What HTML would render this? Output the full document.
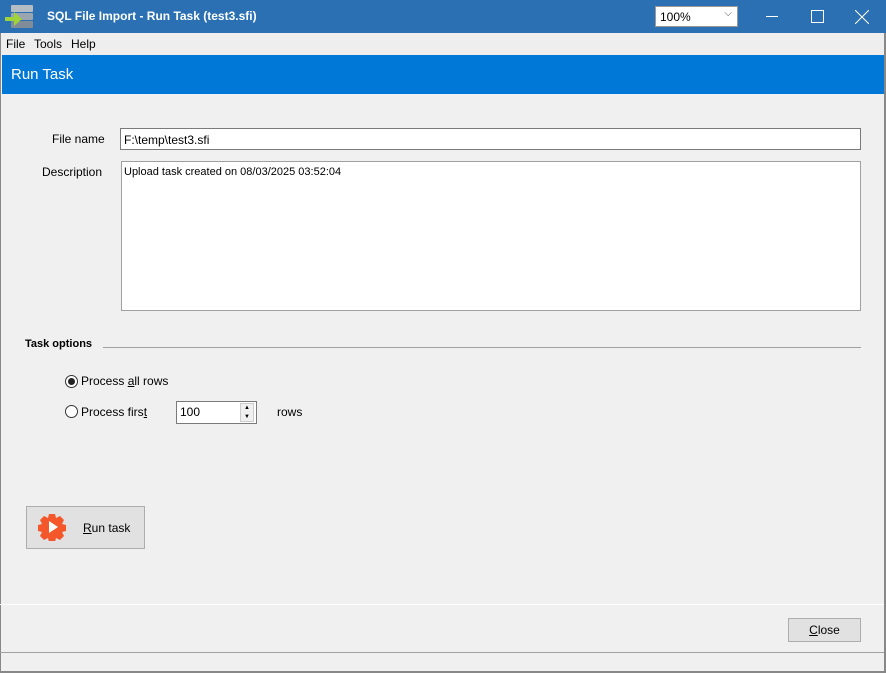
<!DOCTYPE html>
<html><head><meta charset="utf-8"><style>
*{box-sizing:border-box;margin:0;padding:0}
body{width:886px;height:673px;overflow:hidden;background:#f0f0f0;font-family:"Liberation Sans",sans-serif;font-size:12px;color:#000;position:relative}
.a{position:absolute}
u{text-decoration:underline}
</style></head><body>
<div class="a" style="left:0;top:0;width:886px;height:33px;background:#2a70b3"></div>
<svg class="a" style="left:4px;top:4px" width="30" height="26" viewBox="0 0 30 26">
<rect x="7" y="1" width="22" height="7" rx="1" fill="#b4bcc4"/><rect x="7" y="9" width="22" height="7" rx="1" fill="#9aa5b0"/><rect x="7" y="17" width="22" height="7" rx="1" fill="#808c98"/>
<path d="M1 13h9V8l8 7-8 7v-5H1z" fill="#9fd33a"/></svg>
<div class="a" style="left:47px;top:9px;color:#fff;font-weight:bold;font-size:12px">SQL File Import - Run Task (test3.sfi)</div>
<div class="a" style="left:655px;top:6px;width:83px;height:21px;background:#fff;border:1px solid #999;padding:3px 0 0 4px;font-size:12px">100%<span style="position:absolute;right:5px;top:1px;font-size:10px;color:#555">⌵</span></div>
<div class="a" style="left:766px;top:16px;width:12px;height:1px;background:#fff"></div>
<div class="a" style="left:811px;top:10px;width:13px;height:13px;border:1px solid #fff"></div>
<svg class="a" style="left:855px;top:10px" width="14" height="14"><path d="M0 0L14 14M14 0L0 14" stroke="#fff" stroke-width="1"/></svg>
<div class="a" style="left:0;top:33px;width:886px;height:22px;background:#eeeeee"></div>
<div class="a" style="left:6px;top:37px">File</div><div class="a" style="left:34px;top:37px">Tools</div><div class="a" style="left:71px;top:37px">Help</div>
<div class="a" style="left:2px;top:55px;width:882px;height:39px;background:#0078d7"></div>
<div class="a" style="left:11px;top:66px;color:#fff;font-size:15px">Run Task</div>
<div class="a" style="left:0;top:33px;width:1px;height:640px;background:#888"></div>
<div class="a" style="left:884px;top:33px;width:2px;height:640px;background:#888"></div>
<div class="a" style="left:52px;top:132px">File name</div>
<div class="a" style="left:120px;top:128px;width:741px;height:22px;background:#fff;border:1px solid #7a7a7a;padding:4px 3px">F:\temp\test3.sfi</div>
<div class="a" style="left:42px;top:165px">Description</div>
<div class="a" style="left:121px;top:161px;width:740px;height:150px;background:#fff;border:1px solid #a0a0a0;padding:4px 2px;font-size:11px">Upload task created on 08/03/2025 03:52:04</div>
<div class="a" style="left:25px;top:338px;font-weight:bold;font-size:11px">Task options</div>
<div class="a" style="left:103px;top:347px;width:758px;height:1px;background:#a0a0a0"></div>
<div class="a" style="left:65px;top:375px;width:13px;height:13px;border:1px solid #333;border-radius:50%;background:#fff"><div style="margin:2px;width:7px;height:7px;border-radius:50%;background:#222"></div></div>
<div class="a" style="left:81px;top:374px">Process <u>a</u>ll rows</div>
<div class="a" style="left:65px;top:405px;width:13px;height:13px;border:1px solid #333;border-radius:50%;background:#fff"></div>
<div class="a" style="left:81px;top:405px">Process firs<u>t</u></div>
<div class="a" style="left:176px;top:401px;width:81px;height:23px;background:#fff;border:1px solid #7a7a7a;padding:3px 3px">100
<div style="position:absolute;right:2px;top:1px;width:14px;height:19px;background:#f0f0f0;border:1px solid #ccc;font-size:6px;line-height:9px;text-align:center">▲<br>▼</div></div>
<div class="a" style="left:277px;top:405px">rows</div>
<div class="a" style="left:26px;top:506px;width:119px;height:43px;background:#e1e1e1;border:1px solid #adadad"></div>
<svg class="a" style="left:38px;top:513px" width="28" height="28" viewBox="0 0 28 28"><path d="M11 1h6l1 4 4-2 4 4-2 4 4 1v6l-4 1 2 4-4 4-4-2-1 4h-6l-1-4-4 2-4-4 2-4-4-1v-6l4-1-2-4 4-4 4 2z" fill="#f4572a"/><path d="M11 8v12l9-6z" fill="#fff"/></svg>
<div class="a" style="left:83px;top:521px"><u>R</u>un task</div>
<div class="a" style="left:0;top:604px;width:884px;height:1px;background:#fff"></div>
<div class="a" style="left:788px;top:618px;width:73px;height:24px;background:#e1e1e1;border:1px solid #adadad;text-align:center;padding-top:4px"><u>C</u>lose</div>
<div class="a" style="left:0;top:652px;width:884px;height:1px;background:#a0a0a0"></div>
<div class="a" style="left:0;top:671px;width:886px;height:2px;background:#888"></div>
</body></html>
